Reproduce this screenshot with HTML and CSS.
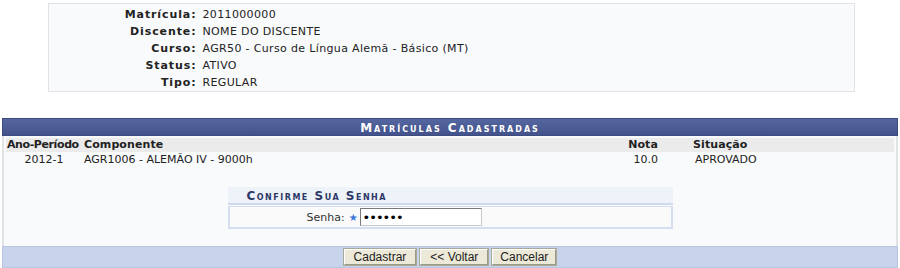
FILE: index.html
```html
<!DOCTYPE html>
<html lang="pt">

<head>
    <meta charset="UTF-8">
    <title>Matrículas Cadastradas</title>
    <link rel="stylesheet" href="styles.css">
</head>

<body>
    <!-- dados do discente -->
    <table class="visualizacao">
        <tr><th>Matrícula:</th><td>2011000000</td></tr>
        <tr><th>Discente:</th><td>NOME DO DISCENTE</td></tr>
        <tr><th>Curso:</th><td>AGR50 - Curso de Língua Alemã - Básico (MT)</td></tr>
        <tr><th>Status:</th><td>ATIVO</td></tr>
        <tr><th>Tipo:</th><td>REGULAR</td></tr>
    </table>

    <!-- matriculas -->
    <div class="formulario">
        <div class="caption">Matrículas Cadastradas</div>
        <div class="corpo">
            <table class="listagem">
                <thead>
                    <tr>
                        <th class="col-ano">Ano-Período</th>
                        <th>Componente</th>
                        <th class="col-nota">Nota</th>
                        <th class="col-sit">Situação</th>
                    </tr>
                </thead>
                <tbody>
                    <tr>
                        <td class="centro">2012-1</td>
                        <td>AGR1006 - ALEMÃO IV - 9000h</td>
                        <td class="nota">10.0</td>
                        <td class="situacao">APROVADO</td>
                    </tr>
                </tbody>
            </table>

            <div class="senha">
                <div class="senha-titulo">Confirme Sua Senha</div>
                <div class="senha-linha">
                    <label>Senha:</label>
                    <span class="obrigatorio">&#9733;</span>
                    <input type="password" value="123456">
                </div>
            </div>
        </div>
        <div class="rodape">
            <button class="btn-cadastrar">Cadastrar</button>
            <button class="btn-voltar">&lt;&lt; Voltar</button>
            <button class="btn-cancelar">Cancelar</button>
        </div>
    </div>
</body>

</html>
```

FILE: styles.css
```css
* {
    box-sizing: border-box;
}

body {
    margin: 0;
    padding: 3px 2px 0 2px;
    font-family: "DejaVu Sans", Verdana, sans-serif;
    font-size: 11px;
    color: #222;
    background: #fff;
}

/* dados do discente */
.visualizacao {
    width: 807px;
    margin: 0 0 0 46px;
    border: 1px solid #e2e3e6;
    background: #f9fafc;
    border-collapse: collapse;
    padding: 0;
}

.visualizacao th {
    width: 150px;
    text-align: right;
    font-weight: bold;
    letter-spacing: 0.9px;
    padding: 2px 2px 2px 0;
    height: 17px;
    white-space: nowrap;
}

.visualizacao td {
    padding: 2px 4px;
    height: 17px;
    letter-spacing: 0.35px;
}

.visualizacao tr:first-child th,
.visualizacao tr:first-child td {
    padding-top: 4px;
    height: 19px;
}

.visualizacao tr:last-child th,
.visualizacao tr:last-child td {
    padding-bottom: 2px;
    height: 17px;
}

/* formulario */
.formulario {
    margin-top: 26px;
    width: 896px;
}

.caption {
    height: 18px;
    line-height: 18px;
    background: linear-gradient(#5566a0, #43528a);
    border: 1px solid #3d4b7e;
    color: #fff;
    text-align: center;
    font-weight: bold;
    font-variant: small-caps;
    font-size: 12px;
    letter-spacing: 2px;
}

.corpo {
    background: #f9fafc;
    border-left: 2px solid #e2e3e6;
    border-right: 2px solid #e2e3e6;
    padding: 2px 2px 17px 2px;
}

.listagem {
    width: 100%;
    border-collapse: collapse;
    table-layout: fixed;
}

.listagem thead th {
    background: #ebebeb;
    font-weight: bold;
    text-align: left;
    padding: 1px 1px;
    height: 14px;
    line-height: 12px;
    white-space: nowrap;
    letter-spacing: 0.1px;
}

.listagem thead .col-ano {
    width: 77px;
    padding-left: 1px;
    letter-spacing: -0.4px;
}

.listagem .col-nota {
    width: 94px;
    text-align: right;
    padding-right: 34px;
}

.listagem .col-sit {
    width: 202px;
}

.listagem td {
    padding: 1px 1px;
    height: 15px;
    white-space: nowrap;
}

.listagem .centro {
    text-align: center;
    padding-right: 2px;
}

.listagem .nota {
    text-align: right;
    padding-right: 34px;
}

.listagem .situacao {
    padding-left: 3px;
}

/* confirmar senha */
.senha {
    width: 445px;
    margin: 20px auto 0 auto;
}

.senha-titulo {
    background: #eef2f9;
    height: 18px;
    line-height: 18px;
    padding-left: 19px;
    color: #2c3868;
    font-weight: bold;
    font-variant: small-caps;
    font-size: 12px;
    letter-spacing: 1.5px;
    border-bottom: 2px solid #cfd9ee;
}

.senha-linha {
    margin-top: 1px;
    border: 2px solid #d5def0;
    border-top-width: 1px;
    background: #fafafa;
    height: 23px;
    display: flex;
    align-items: center;
    padding-left: 77px;
}

.senha-linha label {
    color: #333;
}

.obrigatorio {
    color: #3a74d8;
    font-size: 10px;
    margin: 0 2px 0 4px;
}

.senha-linha input {
    width: 122px;
    height: 18px;
    border: 1px solid #7a7a7a;
    border-right-color: #c8c8c8;
    border-bottom-color: #c8c8c8;
    padding: 0 2px;
    font-size: 13px;
    font-family: "DejaVu Sans", sans-serif;
    letter-spacing: -1px;
    color: #000;
}

.rodape {
    background: #c8d4ec;
    border: 1px solid #b9c6e0;
    height: 22px;
    display: flex;
    justify-content: center;
    align-items: center;
    gap: 4px;
}

.rodape button {
    font-family: "Liberation Sans", Arial, sans-serif;
    font-size: 12px;
    background: #ece9d8;
    border: 1px solid #9a9a8a;
    border-top-color: #fff;
    border-left-color: #fff;
    outline: 1px solid #a9a99a;
    height: 16px;
    padding: 0 9px;
    line-height: 14px;
    color: #222;
}

.rodape .btn-cancelar {
    padding: 0 7px;
}
```
